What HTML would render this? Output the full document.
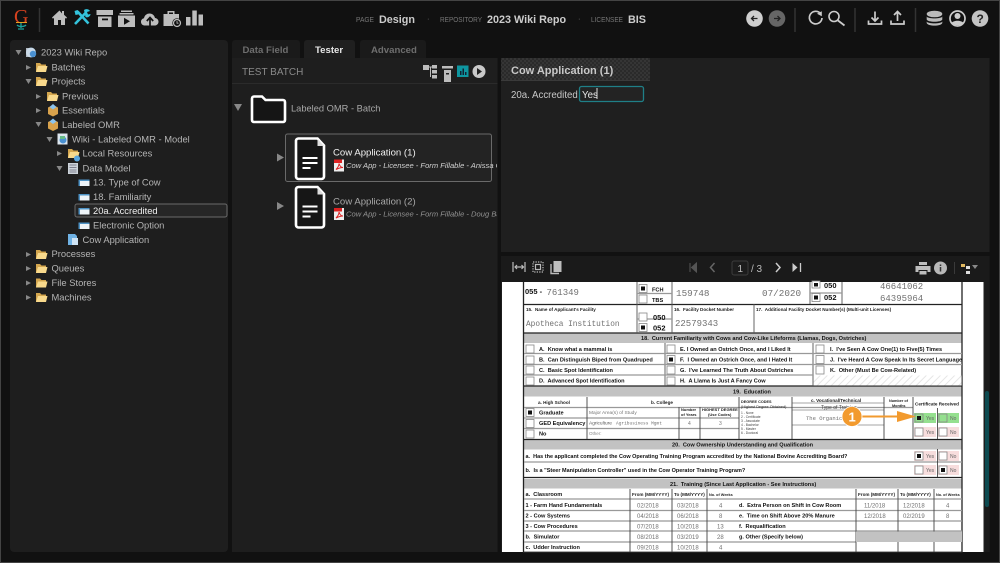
<!DOCTYPE html>
<html><head><meta charset="utf-8"><style>
html,body{margin:0;padding:0;background:#111;width:1000px;height:563px;overflow:hidden}
svg{display:block}
text{font-family:"Liberation Sans",sans-serif;white-space:pre}
.t{font-size:9.4px;fill:#b4b4b4}
.h{font-size:7.500px;fill:#777}
.hb{font-size:10.800px;font-weight:bold;fill:#ccc}
.f{font-size:5.6px;font-weight:bold;fill:#111}
.s{font-size:4.6px;font-weight:bold;fill:#222}
.m{font-family:"Liberation Mono",monospace;fill:#707070;font-size:7.5px}
.i{fill:#bdbdbd}
.ar{fill:#888}
</style></head><body>
<svg width="1000" height="563" viewBox="0 0 1000 563" xmlns="http://www.w3.org/2000/svg">
<defs>
<pattern id="chk" width="4" height="4" patternUnits="userSpaceOnUse"><rect width="4" height="4" fill="#2a2a2a"/><rect width="2" height="2" fill="#353535"/><rect x="2" y="2" width="2" height="2" fill="#353535"/></pattern>
<pattern id="hat" width="5" height="5" patternUnits="userSpaceOnUse" patternTransform="rotate(45)"><rect width="5" height="5" fill="#fff"/><rect width="1" height="5" fill="#e6e6e6"/></pattern>
<g id="fold"><path d="M0 1h4l1.500 1.500H10v7.500H0z" fill="#d4a64e"/><path d="M0 10 2 4h9.500l-1.500 6z" fill="#f8d98c"/></g>
<g id="box"><path d="M1 4 6 1.500 11 4v6.500l-5 2.500L1 10.500z" fill="#d8a24c"/><path d="M2.500 3.500 6 0.500l3.500 3L6 6z" fill="#8cc4ee"/></g>
<g id="leaf"><rect x="0" y="1.500" width="11" height="6.500" fill="#eef4f8"/><rect x="0" y="1.500" width="11" height="1.500" fill="#4e93c5"/><rect x="0" y="3" width="1.500" height="5" fill="#4e93c5"/></g>
<g id="doc"><path d="M5 1.500h19l6.500 7v31a2.500 2.500 0 0 1-2.500 2.500H5a2.500 2.500 0 0 1-2.500-2.500v-36A2.500 2.500 0 0 1 5 1.500z" fill="#161616" stroke="#fff" stroke-width="2.600"/><path d="M24 2v7h6.500z" fill="#ddd"/><path d="M9 21h15M9 26h15M9 31h8" stroke="#fff" stroke-width="2"/></g>
<g id="pdf"><rect x="0" y="0" width="10" height="12" fill="#eee"/><path d="M0 0h8v3.500H0z" fill="#d22"/><path d="M2 10c2-2 3-4 3-6 1 3 2 4 4 4-3 0-5 1-7 2z" fill="none" stroke="#d22" stroke-width="1"/></g>
</defs>

<rect x=".5" y=".5" width="999" height="562" fill="#111" stroke="#444" stroke-width="1"/>

<!-- logo -->
<text x="14" y="23" style="font-family:'Liberation Serif',serif;font-size:20px" fill="#d8421f">G</text>
<path d="M16 22.500h11" stroke="#e9a020" stroke-width="1"/>
<path d="M17 25c2 2 7 2 9 0M21 23v5M18 29h6" stroke="#1ba39c" stroke-width="1.300" fill="none"/>
<path d="M39.500 8v24" stroke="#333" stroke-width="1.500"/>

<!-- nav icons -->
<path class="i" d="M59.500 10.500 52 17.500l1 1.200 1-1V25h4v-5h3v5h4v-7.300l1 1 1-1.200-3-2.800V11h-2v2.500z"/>
<path d="M75 24 86 12.500M77.500 11.500 88.500 23.500" stroke="#33c3dc" stroke-width="2.600" fill="none"/><path d="M84 10c2-1.500 5-1 6 1l-3 1 1 2.500 2.500-.5c0 2.500-3 4-5 3z M74.500 11l3-1 2 2-1.500 2.500-2.500.5z" fill="#33c3dc"/>
<path class="i" d="M96.500 10h16.500v5H96.500zM98 16.500h13.500V27H98z"/><rect x="102" y="18.500" width="6" height="1.800" fill="#111"/>
<path class="i" d="M121 10.500h11v1.500h-11zM119.500 13h14v1.500h-14zM118 15.500h17V27h-17z"/><path d="M124 17.800v7l6-3.500z" fill="#111"/>
<path class="i" d="M145.500 25.500c-3.500 0-4.500-2-4.500-3.800 0-2 1.500-3.300 3-3.500.5-3 3-4.700 5.500-4.700 3 0 5 2 5.500 4.500 2 .2 3.500 1.700 3.500 3.700 0 2-1.500 3.800-4 3.800z"/><path d="M150 26v-7M146.800 21l3.200-3.500 3.200 3.500" stroke="#111" stroke-width="1.700" fill="none"/>
<path class="i" d="M163.500 14h4v-3h7v3h4.500v8h-5v4h-10.500z"/><path d="M169 12.500h4V14h-4z" fill="#111"/><circle cx="177" cy="23" r="4.700" fill="#111"/><circle cx="177" cy="23" r="3.500" fill="none" stroke="#bdbdbd" stroke-width="1.200"/><path d="M177 21v2.200h1.500" stroke="#bdbdbd" stroke-width=".8" fill="none"/>
<path class="i" d="M186 17h4.500v8.500H186zM192.300 10.500h4.500v15h-4.500zM198.500 14.500h4.500v11h-4.500z"/>

<!-- header labels -->
<text x="356" y="22" class="h" textLength="18" lengthAdjust="spacingAndGlyphs">PAGE</text><text x="379" y="23" class="hb">Design</text>
<text x="427" y="21" class="h">·</text>
<text x="440" y="22" class="h" textLength="42" lengthAdjust="spacingAndGlyphs">REPOSITORY</text><text x="487" y="23" class="hb">2023 Wiki Repo</text>
<text x="578" y="21" class="h">·</text>
<text x="591" y="22" class="h" textLength="32" lengthAdjust="spacingAndGlyphs">LICENSEE</text><text x="628" y="23" class="hb">BIS</text>

<!-- right icons -->
<circle cx="754.500" cy="18.500" r="8.300" fill="#cfcfcf"/><path d="M757.500 18.500h-5.500M754 16l-2.500 2.500 2.500 2.500" stroke="#222" stroke-width="1.300" fill="none"/>
<circle cx="777" cy="18.500" r="8.300" fill="#666"/><path d="M774 18.500h5.500M777.500 16l2.500 2.500-2.500 2.500" stroke="#222" stroke-width="1.300" fill="none"/>
<path d="M795 8v24M855 8v24M915.500 8v24" stroke="#333" stroke-width="1.500"/>
<path d="M820.500 13.500a6.300 6.300 0 1 0 1.500 4.500" stroke="#ccc" stroke-width="1.700" fill="none"/><path d="M817 13.700 821.800 11.300v5z" fill="#ccc"/>
<circle cx="834" cy="16.500" r="5" stroke="#ccc" stroke-width="1.600" fill="none"/><path d="M838 20.500 844.500 25.500" stroke="#ccc" stroke-width="1.800"/>
<path d="M875 11.500v9M871.500 17.500l3.500 3.500 3.500-3.500M868.500 20.500v3.500h13v-3.500" stroke="#ccc" stroke-width="1.700" fill="none"/>
<path d="M897.500 21v-9M894 15l3.500-3.500 3.500 3.500M891 20.500v3.500h13v-3.500" stroke="#ccc" stroke-width="1.700" fill="none"/>
<ellipse cx="934.500" cy="14" rx="7.800" ry="3.300" fill="#bbb"/><path d="M926.700 16.500c1 2.500 14.600 2.500 15.600 0v3c-1 3-14.600 3-15.600 0z" fill="#bbb"/><path d="M926.700 21.500c1 2.500 14.600 2.500 15.600 0v1.500c-1 3.500-14.600 3.500-15.600 0z" fill="#bbb"/>
<circle cx="957.500" cy="18.500" r="7.500" fill="#111" stroke="#ccc" stroke-width="1.700"/><circle cx="957.500" cy="16" r="3" fill="#ccc"/><path d="M951.500 23c2-3 10-3 12 0-2 3-10 3-12 0z" fill="#ccc"/>
<circle cx="980" cy="18.500" r="8.300" fill="#c4c4c4"/><text x="976.500" y="23" style="font-size:12px;font-weight:bold" fill="#222">?</text>

<!-- tabs -->
<path d="M232 58V43a3 3 0 0 1 3-3h62a3 3 0 0 1 3 3v15z" fill="#1a1a1a"/>
<path d="M304 58V43a3 3 0 0 1 3-3h45a3 3 0 0 1 3 3v15z" fill="#1f1f1f"/>
<path d="M360 58V43a3 3 0 0 1 3-3h60a3 3 0 0 1 3 3v15z" fill="#1a1a1a"/>
<text x="242.500" y="53" style="font-size:9.600px;font-weight:bold" fill="#6e6e6e">Data Field</text>
<text x="315" y="53" style="font-size:9.600px;font-weight:bold" fill="#e8e8e8">Tester</text>
<text x="371" y="53" style="font-size:9.600px;font-weight:bold" fill="#6e6e6e">Advanced</text>

<!-- panels -->
<rect x="10" y="40" width="218" height="512" rx="4" fill="#1e1e1e"/>
<rect x="232" y="58" width="265.500" height="494" fill="#1e1e1e"/>
<rect x="501" y="58" width="488.500" height="194" fill="#1f1f1f"/>
<rect x="501" y="256" width="488.500" height="296" fill="#1d1d1d"/>

<!-- tree -->
<g class="t">
<path class="ar" d="M15.500 50h6l-3 5zM26 65l5 2.500-5 2.500zM25.500 79h6l-3 5zM36 94l5 2.500-5 2.500zM36 108l5 2.500-5 2.500zM35.500 122h6l-3 5zM46.500 137h6l-3 5zM57 151l5 2.500-5 2.500zM56.500 166h6l-3 5zM26 252l5 2.500-5 2.500zM26 266l5 2.500-5 2.500zM26 280.500l5 2.500-5 2.500zM26 295l5 2.500-5 2.500z"/>
<circle cx="31" cy="52.500" r="5" fill="#9fc3de"/><path d="M26 48h7l2 2v7h-9z" fill="#d5dfe8" opacity=".8"/><circle cx="33" cy="54" r="3.200" fill="#4a90d0"/>
<use href="#fold" x="36" y="62"/><use href="#fold" x="36" y="76"/><use href="#fold" x="47" y="91"/>
<use href="#box" x="47" y="103.500"/><use href="#box" x="47" y="118"/>
<rect x="57.500" y="133.500" width="10" height="11" fill="#dde6ee"/><circle cx="63" cy="140" r="3.500" fill="#4a90d0"/><path d="M60 136h5v3h-5z" fill="#6b8"/>
<use href="#fold" x="68" y="148"/><circle cx="77" cy="158.500" r="3" fill="#5aa5dc"/>
<rect x="68" y="163" width="10" height="11" fill="#ccd3da"/><path d="M69.500 165h7M69.500 167.500h7M69.500 170h7M69.500 172h7" stroke="#667" stroke-width=".8"/>
<rect x="75" y="204" width="152" height="13" rx="2" fill="#262626" stroke="#6a6a6a"/>
<use href="#leaf" x="78.500" y="178"/><use href="#leaf" x="78.500" y="192.500"/><use href="#leaf" x="78.500" y="206.500"/><use href="#leaf" x="78.500" y="221"/>
<path d="M68 234h7l2 2v7h-3v2h-6z" fill="#6fb2e4"/><rect x="72" y="238" width="6" height="7" fill="#cfe4f4"/>
<use href="#fold" x="36" y="249"/><use href="#fold" x="36" y="263"/><use href="#fold" x="36" y="277.500"/><use href="#fold" x="36" y="292"/>
<g transform="translate(0,-.7)">
<text x="41" y="56">2023 Wiki Repo</text>
<text x="51.500" y="71">Batches</text>
<text x="51.500" y="85">Projects</text>
<text x="62" y="100">Previous</text>
<text x="62" y="114">Essentials</text>
<text x="62" y="128.500">Labeled OMR</text>
<text x="72" y="143">Wiki - Labeled OMR - Model</text>
<text x="82.500" y="157">Local Resources</text>
<text x="82.500" y="172">Data Model</text>
<text x="93" y="186">13. Type of Cow</text>
<text x="93" y="200.500">18. Familiarity</text>
<text x="93" y="214.500" style="fill:#f0f0f0">20a. Accredited</text>
<text x="93" y="229">Electronic Option</text>
<text x="82.500" y="243.500">Cow Application</text>
<text x="51.500" y="257.500">Processes</text>
<text x="51.500" y="272">Queues</text>
<text x="51.500" y="286.500">File Stores</text>
<text x="51.500" y="301">Machines</text>
</g>
</g>

<!-- test batch -->
<text x="242" y="75" style="font-size:10px" fill="#8a8a8a">TEST BATCH</text>
<path d="M232 83.500h265.500" stroke="#2b2b2b"/>
<path class="i" d="M423 65h6v5h-6zM432 65h5v3.500h-5zM432 70h5v3.500h-5zM432 75h5v3.500h-5zM429 66.500h3v1h-3zM430 67h1v10h-1z"/>
<path class="i" d="M442 66h11v2.500h-11zM444 70h7v12h-7z"/><rect x="446" y="73" width="3" height="1.500" fill="#222"/>
<rect x="457" y="65.500" width="11.500" height="11.500" fill="#0e96a0"/><path d="M460 71h1.500v4H460zM462.500 68.500H464V75h-1.500zM465 72h1.500v3H465z" fill="#123"/>
<circle cx="479" cy="71.500" r="6.500" fill="#c9c9c9"/><path d="M477 68v7l5-3.500z" fill="#222"/>
<path class="ar" d="M234 104h8l-4 7zM277 153.500l7 4-7 4zM277 202l7 4-7 4z"/>
<path d="M252 112V98.500a2 2 0 0 1 2-2h8l3.500 3.500h17.500a2 2 0 0 1 2 2v18a2 2 0 0 1-2 2H254a2 2 0 0 1-2-2z" fill="#151515" stroke="#fff" stroke-width="2.600"/>
<text x="291" y="111.500" style="font-size:9.300px" fill="#a8a8a8">Labeled OMR - Batch</text>

<rect x="285.500" y="134" width="206" height="47.500" rx="2" fill="#232323" stroke="#6a6a6a"/>
<use href="#doc" x="293.500" y="137"/><use href="#doc" x="293.500" y="185.500"/>
<text x="333" y="155.500" style="font-size:9.600px" fill="#f2f2f2">Cow Application (1)</text>
<text x="333" y="204.500" style="font-size:9.600px" fill="#a8a8a8">Cow Application (2)</text>
<use href="#pdf" x="334" y="159.500"/><use href="#pdf" x="334" y="208"/>
<svg x="345" y="155" width="152" height="70">
<text x="1" y="13" style="font-size:7.600px;font-style:italic" fill="#d0d0d0">Cow App - Licensee - Form Fillable - Anissa C.</text>
<text x="1" y="61.500" style="font-size:7.600px;font-style:italic" fill="#929292">Cow App - Licensee - Form Fillable - Doug Ba</text>
</svg>

<!-- right top -->
<rect x="501" y="58" width="149" height="22" fill="url(#chk)"/>
<path d="M501 80.500h149" stroke="#3a3a3a"/>
<text x="511" y="74" style="font-size:11px;font-weight:bold" fill="#c8c8c8">Cow Application (1)</text>
<text x="511" y="98" style="font-size:9.700px" fill="#c8c8c8">20a. Accredited</text>
<rect x="579.500" y="86.500" width="64" height="15" rx="2" fill="#232323" stroke="#1f7f87" stroke-width="1.300"/>
<text x="582" y="98" style="font-size:9.700px" fill="#e8e8e8">Yes</text>
<path d="M597 88v11" stroke="#ddd"/>

<!-- pdf toolbar -->
<rect x="501" y="256" width="488.500" height="26" fill="#1a1a1a"/>
<g stroke="#bbb" fill="none" stroke-width="1.200"><path d="M513 262v10M525 262v10M515.500 267h7.500M517 265l-2 2 2 2M521.500 265l2 2-2 2"/>
<rect x="533" y="262" width="10" height="10" stroke-dasharray="1.300 1.200"/><rect x="535.500" y="264.500" width="5" height="5"/></g>
<path class="i" d="M553.500 261h8v11h-8z"/><path d="M551 264v9.500h8" stroke="#bbb" stroke-width="1.400" fill="none"/>
<path d="M690 263v9M696.500 263v9l-5-4.500z" fill="#555" stroke="#555"/><path d="M714.500 263l-4 4.500 4 4.500" stroke="#666" stroke-width="1.500" fill="none"/>
<rect x="732" y="261" width="16" height="14" rx="2" fill="#1c1c1c" stroke="#3c3c3c"/>
<text x="737.500" y="272" style="font-size:10px" fill="#bbb">1</text>
<text x="751" y="272" style="font-size:10px" fill="#bbb">/ 3</text>
<path d="M776 263l4 4.500-4 4.500" stroke="#ccc" stroke-width="1.500" fill="none"/><path d="M792.500 263v9l5-4.500z" fill="#ccc"/><path d="M800.500 263v9" stroke="#ccc" stroke-width="1.300"/>
<path class="i" d="M919 262h8v3h-8zM915.500 266h15v6h-3v-2h-9v2h-3zM919.500 271h7v3.500h-7z"/>
<circle cx="940.500" cy="268" r="6.500" fill="#b8b8b8"/><path d="M940.500 264.500v1.500M940.500 267v4.500" stroke="#333" stroke-width="1.500"/>
<path d="M954.500 262v12" stroke="#3a3a3a"/>
<path d="M961 264h4v3h-4z" fill="#e0b860"/><path d="M966 266h4v3h-4zM966 271h4v3h-4z" fill="#ddd"/><path d="M972 265h6l-3 4z" fill="#888"/>

<!-- page -->
<rect x="502" y="282" width="481.500" height="270" fill="#fff"/>
<rect x="985" y="282" width="4" height="270" fill="#1a1a1a"/>
<rect x="985" y="391" width="4" height="116" rx="2" fill="#0d4a50"/>

<g style="filter:blur(.3px)">
<!-- form frame -->
<rect x="524" y="333.500" width="438" height="9.500" fill="#c2c2c2"/>
<rect x="524" y="386.500" width="438" height="10" fill="#c2c2c2"/>
<rect x="524" y="440" width="438" height="9.500" fill="#c2c2c2"/>
<rect x="524" y="479" width="438" height="9.500" fill="#c2c2c2"/>
<g stroke="#222" fill="none">
<path d="M523.500 282v270.500" stroke-width="1.300"/><path d="M962 282v270.500" stroke-width="1.300"/>
<path d="M523 552.300h439.500" stroke-width="1.300"/>
<path d="M524 304.500h438M524 333h438M524 386h438M524 439.500h438M524 477.500h438" stroke-width="1.300"/>
<path d="M637 282v51M672 282v51M754 304v29M810 282v22M842 282v22M813 343v43M665 343v43" stroke-width=".9" stroke="#555"/>
</g>
<g stroke="#999" stroke-width="1.300" fill="none">
<path d="M524 353.500h438M524 364.500h438M524 375h289M524 407.500h389M524 418h215M524 428.500h215M524 462h438M524 499h438M524 510.500h438M524 521h438M524 531h438M524 542h332"/>
<path d="M637 293.500h35M637 319h35M810 293h32"/>
</g>
<path d="M792 403h92M792 410h92M792 425h92" stroke="#888" stroke-width=".8"/>
<path d="M587 397v42M679 407v32M700 407v32M739 397v42M792 397v42M884 397v42M913 397v42M630 489v63M672 489v63M707 489v63M856 489v63M898 489v63M934 489v63" stroke="#444" stroke-width=".9"/>
<rect x="813.600" y="375.500" width="148" height="10" fill="url(#hat)"/>
<rect x="856" y="531.500" width="106" height="10.500" fill="#c2c2c2"/>
<rect x="914" y="413" width="22" height="10" fill="#95e08f"/><rect x="938" y="413" width="21" height="10" fill="#95e08f"/>
<rect x="914" y="427" width="22" height="10" fill="#f7dddd"/><rect x="938" y="427" width="21" height="10" fill="#f7dddd"/>
<rect x="914" y="451" width="22" height="10" fill="#f7dddd"/><rect x="938" y="451" width="21" height="10" fill="#f7dddd"/>
<rect x="914" y="465" width="22" height="10" fill="#f7dddd"/><rect x="938" y="465" width="21" height="10" fill="#f7dddd"/>
<path d="M937.500 408v31M937.500 449v28" stroke="#333" stroke-width=".8"/>
<g fill="#fff" stroke="#888" stroke-width=".8">
<rect x="526" y="345" width="8" height="8"/><rect x="526" y="356" width="8" height="8"/><rect x="526" y="366" width="8" height="8"/><rect x="526" y="377" width="8" height="8"/>
<rect x="667" y="345" width="8" height="8"/><rect x="667" y="355.500" width="8" height="8"/><rect x="667" y="366" width="8" height="8"/><rect x="667" y="377" width="8" height="8"/>
<rect x="816" y="345" width="8" height="8"/><rect x="816" y="355.500" width="8" height="8"/><rect x="816" y="366" width="8" height="8"/>
<rect x="526" y="408.500" width="8" height="8"/><rect x="526" y="419.500" width="8" height="8"/><rect x="526" y="430" width="8" height="8"/>
<rect x="639" y="284.500" width="8" height="8"/><rect x="639" y="295" width="8" height="8"/><rect x="639" y="313" width="8" height="8"/><rect x="639" y="323.500" width="8" height="8"/>
<rect x="812" y="281" width="8" height="7"/><rect x="812" y="293.500" width="8" height="8"/>
<rect x="915" y="414" width="8" height="8" fill="#95e08f"/><rect x="939" y="414" width="8" height="8" fill="#95e08f"/>
<rect x="915" y="428" width="8" height="8"/><rect x="939" y="428" width="8" height="8"/>
<rect x="915" y="452" width="8" height="8"/><rect x="939" y="452" width="8" height="8"/>
<rect x="915" y="466" width="8" height="8"/><rect x="939" y="466" width="8" height="8"/>
</g>
<g fill="#111">
<rect x="641" y="286.500" width="4" height="4"/><rect x="641" y="325.500" width="4" height="4"/><rect x="814" y="283" width="4" height="3.500"/><rect x="814" y="295.500" width="4" height="4"/>
<rect x="669" y="357.500" width="4" height="4"/><rect x="528" y="410.500" width="4" height="4"/><rect x="917" y="416" width="4" height="4"/><rect x="917" y="454" width="4" height="4"/><rect x="941" y="468" width="4" height="4"/>
</g>

<!-- form text -->
<text x="525" y="294" style="font-size:7.500px;font-weight:bold" fill="#111">055 -</text>
<text x="546.500" y="295" class="m" style="font-size:9px">761349</text>
<text x="652" y="291.500" class="f">FCH</text><text x="652" y="302" class="f">TBS</text>
<text x="676" y="296" class="m" style="font-size:9.300px">159748</text>
<text x="762" y="296" class="m" style="font-size:9.300px">07/2020</text>
<text x="824" y="288" style="font-size:7.500px;font-weight:bold" fill="#111">050</text><text x="824" y="300" style="font-size:7.500px;font-weight:bold" fill="#111">052</text>
<text x="880" y="289" class="m" style="font-size:9px">46641062</text><text x="880" y="301" class="m" style="font-size:9px">64395964</text>
<text x="526" y="311" class="s">15.  Name of Applicant's Facility</text>
<text x="526" y="326" class="m" style="font-size:7.800px">Apotheca Institution</text>
<text x="653" y="320" style="font-size:7.500px;font-weight:bold" fill="#111">050</text><text x="653" y="330.500" style="font-size:7.500px;font-weight:bold" fill="#111">052</text>
<text x="674" y="311" class="s">16.  Facility Docket Number</text>
<text x="675" y="326" class="m" style="font-size:9px">22579343</text>
<text x="756" y="311" class="s">17.  Additional Facility Docket Number(s) (Multi-unit Licenses)</text>
<text x="641" y="340" class="f">18.  Current Familiarity with Cows and Cow-Like Lifeforms (Llamas, Dogs, Ostriches)</text>
<text x="539" y="351" class="f">A.  Know what a mammal is</text>
<text x="539" y="361.500" class="f">B.  Can Distinguish Biped from Quadruped</text>
<text x="539" y="372" class="f">C.  Basic Spot Identification</text>
<text x="539" y="382.500" class="f">D.  Advanced Spot Identification</text>
<text x="680" y="351" class="f">E. I Owned an Ostrich Once, and I Liked It</text>
<text x="680" y="361.500" class="f">F.  I Owned an Ostrich Once, and I Hated It</text>
<text x="680" y="372" class="f">G.  I've Learned The Truth About Ostriches</text>
<text x="680" y="382.500" class="f">H.  A Llama Is Just A Fancy Cow</text>
<text x="830" y="351" class="f">I.  I've Seen A Cow One(1) to Five(5) Times</text>
<text x="830" y="361.500" class="f">J.  I've Heard A Cow Speak In Its Secret Language</text>
<text x="830" y="372" class="f">K.  Other (Must Be Cow-Related)</text>
<text x="733" y="393.500" class="f">19.  Education</text>
<text x="538" y="404" class="s">a. High School</text><text x="651" y="404" class="s">b. College</text>
<text x="681" y="411" class="s" style="font-size:4px">Number</text><text x="681" y="416" class="s" style="font-size:4px">of Years</text>
<text x="702" y="411" class="s" style="font-size:4px">HIGHEST DEGREE</text><text x="708" y="416" class="s" style="font-size:4px">(Use Codes)</text>
<text x="741" y="403" class="s" style="font-size:3.800px">DEGREE CODES</text><text x="741" y="408" class="s" style="font-size:3.800px;font-weight:normal">(Highest Degree Obtained)</text>
<text x="741" y="414" style="font-size:3.300px" fill="#444">1 - None</text><text x="741" y="418" style="font-size:3.300px" fill="#444">2 - Certificate</text><text x="741" y="422" style="font-size:3.300px" fill="#444">3 - Associate</text><text x="741" y="426" style="font-size:3.300px" fill="#444">4 - Bachelor</text><text x="741" y="430" style="font-size:3.300px" fill="#444">5 - Master</text><text x="741" y="434" style="font-size:3.300px" fill="#444">6 - Doctoral</text>
<text x="811" y="402" class="s">c. Vocational/Technical</text>
<text x="821" y="409" style="font-size:5px" fill="#444">Type of Training</text>
<text x="806" y="420" class="m" style="font-size:5.500px">The Organic Farm</text>
<text x="889" y="402" class="s" style="font-size:3.800px">Number of</text><text x="892" y="407" class="s" style="font-size:3.800px">Months</text>
<text x="915" y="405.500" class="s">Certificate Received</text>
<text x="539" y="414.500" class="f">Graduate</text><text x="539" y="425" class="f">GED Equivalency</text><text x="539" y="435.500" class="f">No</text>
<text x="589" y="414" style="font-size:4.800px" fill="#777">Major Area(s) of Study</text>
<text x="589" y="424.500" style="font-size:4.800px" fill="#555">Agriculture</text><text x="616" y="424.500" class="m" style="font-size:4.500px">Agribusiness Mgmt</text>
<text x="589" y="435" style="font-size:4.500px" fill="#888">Other:</text>
<text x="688" y="425" style="font-size:5px" fill="#777">4</text><text x="719" y="425" style="font-size:5px" fill="#777">3</text>
<g style="font-size:5px" fill="#666"><text x="926" y="420">Yes</text><text x="950" y="420">No</text><text x="926" y="434">Yes</text><text x="950" y="434">No</text><text x="926" y="458">Yes</text><text x="950" y="458">No</text><text x="926" y="472">Yes</text><text x="950" y="472">No</text></g>
<text x="672" y="446.500" class="f">20.  Cow Ownership Understanding and Qualification</text>
<text x="525.500" y="458" class="f" style="font-size:5.500px">a.  Has the applicant completed the Cow Operating Training Program accredited by the National Bovine Accrediting Board?</text>
<text x="525.500" y="472" class="f" style="font-size:5.500px">b.  Is a "Steer Manipulation Controller" used in the Cow Operator Training Program?</text>
<text x="670" y="486" class="f">21.  Training (Since Last Application - See Instructions)</text>
<text x="525.500" y="496" class="f">a.  Classroom</text>
<text x="632" y="496" class="s">From (MM/YYYY)</text><text x="674" y="496" class="s">To (MM/YYYY)</text><text x="709" y="496" class="s" style="font-size:3.800px">No. of Weeks</text>
<text x="858" y="496" class="s">From (MM/YYYY)</text><text x="900" y="496" class="s">To (MM/YYYY)</text><text x="936" y="496" class="s" style="font-size:3.800px">No. of Weeks</text>
<text x="525.500" y="507" class="f">1 - Farm Hand Fundamentals</text>
<text x="525.500" y="517.500" class="f">2 - Cow Systems</text>
<text x="525.500" y="528" class="f">3 - Cow Procedures</text>
<text x="525.500" y="538.500" class="f">b.  Simulator</text>
<text x="525.500" y="549" class="f">c.  Udder Instruction</text>
<text x="739" y="507" class="f">d.  Extra Person on Shift in Cow Room</text>
<text x="739" y="517.500" class="f">e.  Time on Shift Above 20% Manure</text>
<text x="739" y="528" class="f">f.  Requalification</text>
<text x="739" y="538.500" class="f">g. Other (Specify below)</text>
<g class="m" style="font-size:6px">
<text x="637" y="507.500">02/2018</text><text x="677" y="507.500">03/2018</text><text x="719" y="507.500">4</text>
<text x="637" y="518">04/2018</text><text x="677" y="518">06/2018</text><text x="719" y="518">8</text>
<text x="637" y="528.500">07/2018</text><text x="677" y="528.500">10/2018</text><text x="717" y="528.500">13</text>
<text x="637" y="539">08/2018</text><text x="677" y="539">03/2019</text><text x="717" y="539">28</text>
<text x="637" y="549.500">09/2018</text><text x="677" y="549.500">10/2018</text><text x="719" y="549.500">4</text>
<text x="864" y="507.500">11/2018</text><text x="903" y="507.500">12/2018</text><text x="946" y="507.500">4</text>
<text x="864" y="518">12/2018</text><text x="903" y="518">02/2019</text><text x="946" y="518">8</text>
</g>
</g>

<!-- callout -->
<path d="M860 416.500H898" stroke="#f29a2e" stroke-width="2"/>
<path d="M897 411 916 416.500 897 422z" fill="#f29a2e"/>
<circle cx="852" cy="416.500" r="10" fill="#f29a2e" stroke="#fff" stroke-width=".8"/>
<text x="848.500" y="421.500" style="font-size:13px;font-weight:bold" fill="#fff">1</text>
</svg>
</body></html>
